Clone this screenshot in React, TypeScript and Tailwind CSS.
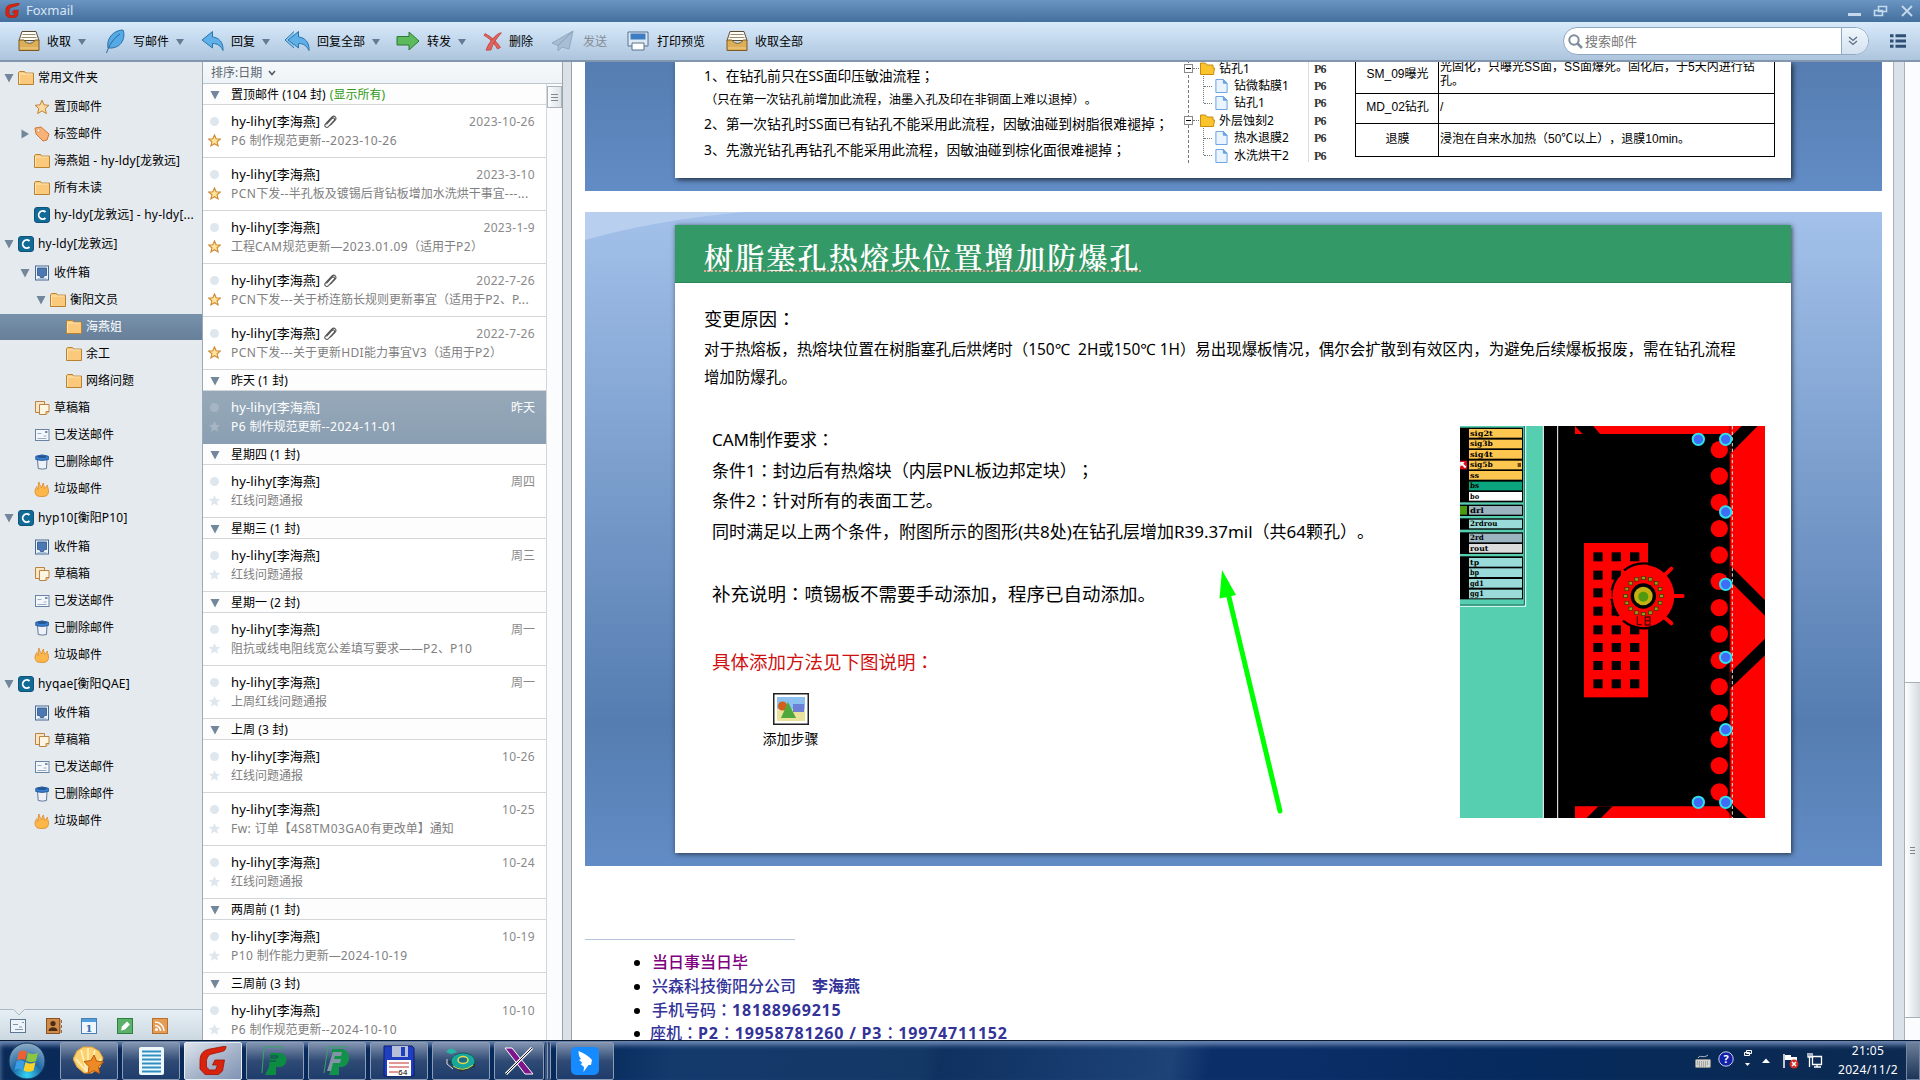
import type { ReactNode } from "react";
import clsx from "clsx";

type IconName = "folder" | "star" | "tag" | "account" | "inbox" | "draft" | "sent" | "trash" | "junk";

interface TreeItem {
  label: string;
  icon: IconName;
  level: number;
  arrow?: "open" | "closed";
  selected?: boolean;
  head?: boolean;
}

interface Mail {
  subject: string;
  date: string;
  clip?: boolean;
  starred?: boolean;
  selected?: boolean;
}

const boxes: TreeItem[] = [
  { label: "草稿箱", icon: "draft", level: 1 },
  { label: "已发送邮件", icon: "sent", level: 1 },
  { label: "已删除邮件", icon: "trash", level: 1 },
  { label: "垃圾邮件", icon: "junk", level: 1 },
];

const tree: TreeItem[] = [
  { label: "常用文件夹", icon: "folder", level: 0, arrow: "open", head: true },
  { label: "置顶邮件", icon: "star", level: 1 },
  { label: "标签邮件", icon: "tag", level: 1, arrow: "closed" },
  { label: "海燕姐 - hy-ldy[龙敦远]", icon: "folder", level: 1 },
  { label: "所有未读", icon: "folder", level: 1 },
  { label: "hy-ldy[龙敦远] - hy-ldy[...", icon: "account", level: 1 },
  { label: "hy-ldy[龙敦远]", icon: "account", level: 0, arrow: "open", head: true },
  { label: "收件箱", icon: "inbox", level: 1, arrow: "open" },
  { label: "衡阳文员", icon: "folder", level: 2, arrow: "open" },
  { label: "海燕姐", icon: "folder", level: 3, selected: true },
  { label: "余工", icon: "folder", level: 3 },
  { label: "网络问题", icon: "folder", level: 3 },
  ...boxes,
  { label: "hyp10[衡阳P10]", icon: "account", level: 0, arrow: "open", head: true },
  { label: "收件箱", icon: "inbox", level: 1 },
  ...boxes,
  { label: "hyqae[衡阳QAE]", icon: "account", level: 0, arrow: "open", head: true },
  { label: "收件箱", icon: "inbox", level: 1 },
  ...boxes,
];

const groups: { title: string; extra?: string; mails: Mail[] }[] = [
  {
    title: "置顶邮件 (104 封)",
    extra: "(显示所有)",
    mails: [
      { subject: "P6 制作规范更新--2023-10-26", date: "2023-10-26", clip: true, starred: true },
      { subject: "PCN下发--半孔板及镀锡后背钻板增加水洗烘干事宜---...", date: "2023-3-10", starred: true },
      { subject: "工程CAM规范更新—2023.01.09（适用于P2）", date: "2023-1-9", starred: true },
      { subject: "PCN下发---关于桥连筋长规则更新事宜（适用于P2、P...", date: "2022-7-26", clip: true, starred: true },
      { subject: "PCN下发---关于更新HDI能力事宜V3（适用于P2）", date: "2022-7-26", clip: true, starred: true },
    ],
  },
  { title: "昨天 (1 封)", mails: [{ subject: "P6 制作规范更新--2024-11-01", date: "昨天", selected: true }] },
  { title: "星期四 (1 封)", mails: [{ subject: "红线问题通报", date: "周四" }] },
  { title: "星期三 (1 封)", mails: [{ subject: "红线问题通报", date: "周三" }] },
  {
    title: "星期一 (2 封)",
    mails: [
      { subject: "阻抗或线电阻线宽公差填写要求——P2、P10", date: "周一" },
      { subject: "上周红线问题通报", date: "周一" },
    ],
  },
  {
    title: "上周 (3 封)",
    mails: [
      { subject: "红线问题通报", date: "10-26" },
      { subject: "Fw: 订单【4S8TM03GA0有更改单】通知", date: "10-25" },
      { subject: "红线问题通报", date: "10-24" },
    ],
  },
  { title: "两周前 (1 封)", mails: [{ subject: "P10 制作能力更新—2024-10-19", date: "10-19" }] },
  { title: "三周前 (3 封)", mails: [{ subject: "P6 制作规范更新--2024-10-10", date: "10-10" }] },
];

const STAR = "M8 1.2l2 4.7 5 .4-3.8 3.3 1.2 5L8 11.9l-4.4 2.7 1.2-5L1 6.3l5-.4z";

// Mixed text: tracks the latin runs and centres full-width colons and semicolons.
function Mix({ text, latin }: { text: string; latin?: string }) {
  return (
    <>
      {text.split(/([\x20-\x7e]+|[：；])/).map((part, i) => {
        if (part === "：" || part === "；") {
          return (
            <span key={i} lang="zh-TW" className="font-['Noto_Sans_CJK_TC',sans-serif] leading-none">
              {part}
            </span>
          );
        }
        return i % 2 ? (
          <span key={i} className={latin}>
            {part}
          </span>
        ) : (
          part
        );
      })}
    </>
  );
}

function TreeIcon({ name }: { name: IconName }) {
  return (
    <svg viewBox="0 0 16 16" className="h-4 w-4 shrink-0">
      {name === "folder" && (
        <>
          <path d="M.5 14.5v-12l1-1h5l1.2 1.6h7.8v11.4z" fill="#fbc97c" stroke="#b9822f" />
          <path d="M1.5 4h13M1.5 4v9.5" stroke="#ffe6b8" fill="none" />
        </>
      )}
      {name === "star" && <path d={STAR} fill="#fcd9a0" stroke="#c08436" />}
      {name === "tag" && (
        <>
          <path d="M1 2l6-1 8 7-2 6-4 1-7-7z" fill="#f8b277" stroke="#c97a3c" />
          <circle cx="4.5" cy="4.5" r="1.4" fill="#fff" stroke="#c97a3c" strokeWidth=".6" />
        </>
      )}
      {name === "account" && (
        <>
          <rect x=".5" y=".5" width="15" height="15" rx="2.5" fill="#126a97" stroke="#0e5478" />
          <path d="M11.5 5A4 4.200 0 1 0 11.5 11" fill="none" stroke="#fff" strokeWidth="1.8" />
        </>
      )}
      {name === "inbox" && (
        <>
          <rect x="1.5" y="1" width="13" height="14" fill="#eef3f9" stroke="#476a94" />
          <path d="M3.5 3h9v7.5h-2l-1 2h-3l-1-2h-2z" fill="#4a78b5" stroke="#2c5488" strokeWidth=".8" />
          <path d="M3.5 13.8h9" stroke="#7e9cc0" strokeWidth=".8" />
        </>
      )}
      {name === "draft" && (
        <>
          <path d="M1.5 1.5h9v11h-9z" fill="#fbe6c4" stroke="#b98443" />
          <path d="M5.5 4.5h9.500v7l-3 3h-6.500z" fill="#fff6e2" stroke="#b98443" />
          <path d="M12 14.5v-3h3" fill="#f4c98c" stroke="#b98443" />
        </>
      )}
      {name === "sent" && (
        <>
          <rect x="1.5" y="2.5" width="13.500" height="11" fill="#f3f7fb" stroke="#6b83a3" />
          <path d="M3.5 6.5h4M3.5 11.5h9M9.5 9h3" stroke="#9aaec6" />
          <path d="M11 5h2.500" stroke="#5a7394" strokeWidth="1.6" />
        </>
      )}
      {name === "trash" && (
        <>
          <path d="M3.5 5h9.5l-.5 9.5q-4 1.300-8.300 0z" fill="#eef2f7" stroke="#60789a" />
          <path d="M1.800 2.300q6.300-2.800 12.600 0v3.200q-6.300 1.800-12.600 0z" fill="#3b7fd0" stroke="#275d9f" />
          <ellipse cx="8" cy="2.7" rx="4.5" ry="1.2" fill="#235591" />
        </>
      )}
      {name === "junk" && (
        <path
          d="M3 14.800C0 12 .8 8 3 5.500c0 2 .8 2 1.200 3C5 6 3.500 4 5 1c.2 3 2 4 2.500 6C8.500 5 8 3 9.500 2c0 2.500 1 3.500 1 5.500C12 7 12 5.500 13.500 4c-.5 2 1 3 1 6 0 2-.5 3.500-2 4.800-2.500 1-7 1-9.500 0z"
          fill="#fdb648"
          stroke="#d9862b"
          strokeWidth=".8"
        />
      )}
    </svg>
  );
}

const indents = ["pl-0.5", "pl-[18px]", "pl-[34px]", "pl-[50px]"];

function Triangle({ dir = "down" }: { dir?: "down" | "right" }) {
  return (
    <svg viewBox="0 0 10 10" className="h-2.5 w-2.5 shrink-0">
      <path d={dir === "down" ? "M.5 1h9L5 9.5z" : "M1.5.5v9L9 5z"} fill="#72879b" />
    </svg>
  );
}

function Sidebar() {
  return (
    <aside className="flex w-[203px] shrink-0 flex-col border-r border-[#9aa9b6] bg-[#e5eaef]">
      <div className="flex-1">
        {tree.map((item, i) => (
          <div key={i} className={clsx("flex items-center", item.head ? "h-[31px]" : "h-[27px]")}>
            <div
              className={clsx(
                "flex h-[26px] w-full items-center whitespace-nowrap text-xs",
                indents[item.level],
                item.selected ? "bg-linear-to-b from-[#7892ab] to-[#677f99] text-white" : "text-black"
              )}
            >
              <span className="flex w-4 items-center pl-0.5">
                {item.arrow ? <Triangle dir={item.arrow === "open" ? "down" : "right"} /> : null}
              </span>
              <TreeIcon name={item.icon} />
              <span className="ml-1">
                <Mix text={item.label} latin="tracking-[0.2px]" />
              </span>
            </div>
          </div>
        ))}
      </div>
      <div className="relative flex h-[31px] items-center gap-[19.5px] border-t border-[#a9b8c4] bg-linear-to-b from-[#e6eff5] to-[#ccd8e1] pl-[10px] pt-px">
        <svg viewBox="0 0 12 7" className="absolute -top-px left-[13px] h-[7px] w-3">
          <path d="M0 0h12L6 6z" fill="#e5eaef" />
          <path d="M.5.5L6 6 11.5.5" fill="none" stroke="#a9b8c4" />
        </svg>
        <svg viewBox="0 0 16 16" className="h-4 w-4">
          <rect x=".5" y="1.5" width="15" height="13" fill="#edf3f8" stroke="#5f7690" />
          <path d="M3 6.5h5M5 11.5h8M9 9h3M12 4.5h2" stroke="#7d94ad" />
        </svg>
        <svg viewBox="0 0 16 16" className="h-4 w-4">
          <rect x=".5" y=".5" width="13" height="15" fill="#d08a4a" stroke="#8a5325" />
          <path d="M14 1v14M15.5 2v3m0 2v3m0 2v3" stroke="#a4652f" />
          <circle cx="7" cy="5.5" r="2.6" fill="#4b2d14" />
          <path d="M2.5 13c0-5 9-5 9 0z" fill="#4b2d14" />
        </svg>
        <svg viewBox="0 0 16 16" className="h-4 w-4">
          <rect x=".5" y=".5" width="15" height="15" fill="#eef6fc" stroke="#4a7fb0" />
          <path d="M1 1h14v3H1z" fill="#4f9fdf" />
          <text x="8" y="13.5" fontSize="10" fontWeight="bold" fontFamily="DejaVu Serif" textAnchor="middle" fill="#2f6fa8">
            1
          </text>
        </svg>
        <svg viewBox="0 0 16 16" className="h-4 w-4">
          <rect x=".5" y=".5" width="15" height="15" fill="#5bb06a" stroke="#2f7f41" />
          <path d="M4 12.5l1-4 5-5 3 3-5 5z" fill="#fff" />
        </svg>
        <svg viewBox="0 0 16 16" className="h-4 w-4">
          <rect x=".5" y=".5" width="15" height="15" fill="#e59a55" stroke="#b86f2c" />
          <circle cx="4.5" cy="11.5" r="1.5" fill="#fff" />
          <path d="M3 7.5a5.500 5.500 0 0 1 5.500 5.500M3 4a9 9 0 0 1 9 9" fill="none" stroke="#fff" strokeWidth="1.5" />
        </svg>
      </div>
    </aside>
  );
}

function MailRow({ mail }: { mail: Mail }) {
  const { selected } = mail;
  return (
    <div
      className={clsx(
        "flex h-[53px] border-b",
        selected ? "border-[#8a9fb2] bg-linear-to-b from-[#97a9b9] to-[#8a9fb2]" : "border-[#d3d7da] bg-white"
      )}
    >
      <div className="flex w-7 shrink-0 flex-col items-center pr-[5px] pt-3">
        <span className={clsx("h-[9px] w-[9px] rounded-full", selected ? "bg-[#a5b5c4]" : "bg-[#dfe7ee]")} />
        <svg viewBox="0 0 16 16" className="mt-2 h-[13px] w-[13px]">
          <path
            d={STAR}
            fill={selected ? "#a5b5c4" : mail.starred ? "#ffe49a" : "#dfe7ee"}
            stroke={mail.starred ? "#cf8a35" : "none"}
            strokeWidth="1.4"
          />
        </svg>
      </div>
      <div className="min-w-0 flex-1 whitespace-nowrap pr-[11px] pt-[7px]">
        <div className="flex h-5 items-center">
          <span className={clsx("text-[13px]", selected ? "text-white" : "text-black")}>
            <Mix text="hy-lihy[李海燕]" latin="tracking-[0.15px]" />
          </span>
          {mail.clip ? (
            <svg viewBox="0 0 14 14" className="ml-[3px] h-[14px] w-[14px]">
              <path
                d="M3.5 9.5l5.500-6c1.500-1.500 3.500.3 2 2L5.500 11.700c-2 2-5-.5-3-2.900L9 2c2.300-2.200 5.300.7 3.200 3.200L7.500 10"
                fill="none"
                stroke="#555"
                strokeWidth="1.1"
              />
            </svg>
          ) : null}
          <span className={clsx("ml-auto text-xs", selected ? "text-white" : "text-[#8a8a8a]")}>
            <Mix text={mail.date} latin="tracking-[0.33px]" />
          </span>
        </div>
        <div className={clsx("h-[18px] text-xs leading-[18px]", selected ? "text-white" : "text-[#808080]")}>
          <Mix text={mail.subject} latin="tracking-[0.42px]" />
        </div>
      </div>
    </div>
  );
}

function MailList() {
  return (
    <section className="flex w-[359px] shrink-0 flex-col overflow-hidden">
      <div className="flex h-[22px] shrink-0 items-center border-b border-[#bcc6cd] bg-linear-to-b from-[#f6f9fb] to-[#eef3f7] pl-2 text-xs text-[#5c6670]">
        排序:日期
        <svg viewBox="0 0 8 6" className="ml-1.5 h-1.5 w-2">
          <path d="M1 1l3 3.5L7 1" fill="none" stroke="#4b5763" strokeWidth="1.5" />
        </svg>
      </div>
      <div className="flex min-h-0 flex-1">
        <div className="w-[344px] shrink-0 overflow-hidden border-r border-[#d3d7da]">
          {groups.map((g) => (
            <div key={g.title}>
              <div className="flex h-[21px] items-center border-b border-[#d3d7da] bg-[#fdfdfd] pl-[7px] pt-0.5 text-xs text-black">
                <Triangle />
                <span className="ml-[11px]">
                  <Mix text={g.title} latin="tracking-[0.1px]" />
                </span>
                {g.extra ? <span className="ml-1 text-[#2f9a10]">{g.extra}</span> : null}
              </div>
              {g.mails.map((m, i) => (
                <MailRow key={i} mail={m} />
              ))}
            </div>
          ))}
        </div>
        <div className="flex-1 bg-[#fbfcfd] pt-0.5">
          <div className="flex h-[22px] flex-col items-center justify-center gap-0.5 border border-[#aab4bc] bg-linear-to-r from-[#fbfcfd] to-[#dde3e8]">
            <i className="h-px w-[7px] bg-[#7d8790]" />
            <i className="h-px w-[7px] bg-[#7d8790]" />
            <i className="h-px w-[7px] bg-[#7d8790]" />
          </div>
        </div>
      </div>
    </section>
  );
}

function TrayBox() {
  return (
    <svg viewBox="0 0 22 22" className="h-[22px] w-[22px]">
      <path d="M4 1.5h14l3 9H1z" fill="#fffdf6" stroke="#5b4a33" />
      <path d="M4.5 4.5h13M3.5 7.5h15" stroke="#9c8a6e" />
      <path d="M1 10h4.500q6 7 12 0H21v10.500H1z" fill="#dcae58" stroke="#7f5a20" />
      <path d="M2 18h18" stroke="#f0d08c" />
    </svg>
  );
}

function ReplyArrow({ all }: { all?: boolean }) {
  return (
    <svg viewBox={all ? "0 0 27 22" : "0 0 24 22"} className={all ? "h-[22px] w-[27px]" : "h-[22px] w-6"}>
      {all ? <path d="M10 1.5L1 10l9 8" fill="#8cc6ee" stroke="#2f78ad" /> : null}
      <path
        transform={all ? "translate(3 0)" : undefined}
        d="M11.5 1.5L1 10l10.500 8v-4.500c5 0 8 2 10.500 7 .5-8-4-13-10.500-13.500z"
        fill="#5fb0e8"
        stroke="#2b74ac"
      />
    </svg>
  );
}

function Tool({ icon, label, className, iconClass, arrow, muted }: {
  icon: ReactNode;
  label: string;
  className: string;
  iconClass: string;
  arrow?: boolean;
  muted?: boolean;
}) {
  return (
    <div className={clsx("flex shrink-0 items-center text-xs", className, muted ? "text-[#848d96]" : "text-black")}>
      <span className={clsx("shrink-0", iconClass)}>{icon}</span>
      <span className="pt-0.5">{label}</span>
      {arrow ? (
        <svg viewBox="0 0 8 6" className="ml-[7px] mt-0.5 h-1.5 w-2">
          <path d="M0 0h8L4 6z" fill="#647b93" />
        </svg>
      ) : null}
    </div>
  );
}

function Toolbar() {
  return (
    <div className="flex h-10 shrink-0 items-center border-b-2 border-[#8297ad] bg-linear-to-b from-[#d8eafb] to-[#adc5dd] pl-[18px]">
      <Tool className="w-[87px]" iconClass="w-[29px]" icon={<TrayBox />} label="收取" arrow />
      <Tool
        className="w-[96px]"
        iconClass="w-[28px]"
        icon={
          <svg viewBox="0 0 22 25" className="h-[25px] w-[22px]">
            <path d="M3 19C1 8 10 1 18 1c3 7-1 17-11 18z" fill="#55a9e4" stroke="#2c74a9" />
            <path d="M1.5 24C4 16 9 9 15 5" fill="none" stroke="#2a6a9e" />
          </svg>
        }
        label="写邮件"
        arrow
      />
      <Tool className="w-[83px]" iconClass="w-[30px]" icon={<ReplyArrow />} label="回复" arrow />
      <Tool className="w-[112px]" iconClass="w-[33px]" icon={<ReplyArrow all />} label="回复全部" arrow />
      <Tool
        className="w-[87px]"
        iconClass="w-[31px]"
        icon={
          <svg viewBox="0 0 24 20" className="h-5 w-6">
            <path d="M1 5.5h12V1l10 9-10 9v-5H1z" fill="#5cb95c" stroke="#2c7a34" />
          </svg>
        }
        label="转发"
        arrow
      />
      <Tool
        className="w-[68px]"
        iconClass="w-[26px]"
        icon={
          <svg viewBox="0 0 20 19" className="h-[19px] w-5">
            <path d="M2 1.500c6 3 12 8 15.500 14l-3 1.500C11 11 6 6 1 3.500z" fill="#e0625a" stroke="#b5332e" strokeWidth=".6" />
            <path d="M18.500.8C14 6 10 11 8 18l-5 .2C5.500 11 10 5 16 1.200z" fill="#e0625a" stroke="#b5332e" strokeWidth=".6" />
          </svg>
        }
        label="删除"
      />
      <Tool
        className="w-[76px]"
        iconClass="w-8"
        muted
        icon={
          <svg viewBox="0 0 23 22" className="h-[22px] w-[23px]">
            <path d="M22 1L1 13l6 2.500zM22 1L7 15.500V21l4-4 7 2z" fill="#a8bed4" stroke="#90a8c0" />
          </svg>
        }
        label="发送"
      />
      <Tool
        className="w-[99px]"
        iconClass="w-[30px]"
        icon={
          <svg viewBox="0 0 22 20" className="h-5 w-[22px]">
            <path d="M1 1h20v14H1z" fill="#dfe9f3" stroke="#55708f" />
            <path d="M3.5 2.5h15v6h-15z" fill="#3e7cc4" />
            <path d="M5 12h12v7H5z" fill="#fff" stroke="#55708f" />
          </svg>
        }
        label="打印预览"
      />
      <Tool className="w-[90px]" iconClass="w-[29px]" icon={<TrayBox />} label="收取全部" />
      <div className="ml-auto flex h-7 w-[306px] shrink-0 overflow-hidden rounded-full border border-[#8fa9c4] bg-white">
        <div className="flex flex-1 items-center pl-1">
          <svg viewBox="0 0 15 15" className="h-[15px] w-[15px]">
            <circle cx="6" cy="6" r="4.7" fill="none" stroke="#7e8c9c" strokeWidth="2" />
            <path d="M9.5 9.5L14 14" stroke="#7e8c9c" strokeWidth="2.5" />
          </svg>
          <span className="ml-0.5 pt-0.5 text-[13px] text-[#777]">搜索邮件</span>
        </div>
        <div className="flex w-[27px] items-center justify-center border-l border-[#8fa9c4] bg-linear-to-b from-[#f0f6fc] to-[#d4e2f0] pr-1">
          <svg viewBox="0 0 10 10" className="h-2.5 w-2.5">
            <path d="M1 1l4 3.5L9 1M1 5l4 3.5L9 5" fill="none" stroke="#5b6f84" strokeWidth="1.3" />
          </svg>
        </div>
      </div>
      <svg viewBox="0 0 16 14" className="ml-[21px] mr-[14px] h-[14px] w-4 shrink-0">
        <path d="M0 1.7h3.500M0 7h3.500M0 12.300h3.500M5.500 1.700H16M5.500 7H16M5.500 12.300H16" stroke="#2f4f75" strokeWidth="3" />
      </svg>
    </div>
  );
}

function FoxLogo({ className }: { className: string }) {
  return (
    <svg viewBox="0 0 28 29" className={className}>
      <path
        d="M27 0c0 3-1 5-4 5.500L13 8c-4 1-5.500 4-5.500 8v5l3 3h6l2-5h-5L16 14h9.500l-2 11-4 3.500H6L1 23v-8C1 7 5 4 11 3z"
        fill="#d9230f"
        stroke="#9c1406"
        strokeWidth=".8"
      />
    </svg>
  );
}

const flow = [
  { name: "钻孔1", parent: true },
  { name: "钻微黏膜1" },
  { name: "钻孔1" },
  { name: "外层蚀刻2", parent: true },
  { name: "热水退膜2" },
  { name: "水洗烘干2" },
];

function FlowTree() {
  return (
    <div className="relative mt-[-2px] h-[104px] w-[150px]">
      <i className="absolute left-[4px] top-0 h-[103px] border-l border-dashed border-[#777]" />
      <i className="absolute left-[19px] top-4 h-[27px] border-l border-dotted border-[#777]" />
      <i className="absolute left-[19px] top-[68px] h-[27px] border-l border-dotted border-[#777]" />
      <i className="absolute left-[124px] top-0 h-[102px] border-l border-[#ddd]" />
      {flow.map((f, i) => (
        <div key={i} className="relative flex h-[17.4px] items-center text-xs leading-none text-black">
          {f.parent ? (
            <>
              <span className="flex h-[9px] w-[9px] items-center justify-center border border-[#888] bg-white">
                <i className="h-px w-[5px] bg-black" />
              </span>
              <i className="w-1.5 border-t border-dotted border-[#777]" />
              <svg viewBox="0 0 15 13" className="ml-px h-[13px] w-[15px]">
                <path d="M.5 12.5V1h5l1.500 2h6v3h1.500l-1 6.500z" fill="#fcc42c" stroke="#c98a10" />
              </svg>
              <span className="ml-1">{f.name}</span>
            </>
          ) : (
            <>
              <i className="ml-[20px] w-2 border-t border-dotted border-[#777]" />
              <svg viewBox="0 0 13 15" className="ml-[3px] h-[14px] w-[13px]">
                <path d="M.5.5h8l4 4v10H.5z" fill="#eaf4ff" stroke="#5f9be0" />
                <path d="M8.5.5v4h4" fill="#6ba6e8" stroke="#5f9be0" />
              </svg>
              <span className="ml-[6px]">{f.name}</span>
            </>
          )}
          <span className="absolute left-[130px] font-['Liberation_Serif'] text-[12px] font-bold tracking-[-0.8px] text-[#333]">
            P6
          </span>
        </div>
      ))}
    </div>
  );
}

const specs = [
  {
    step: "SM_09曝光",
    note: "光固化，只曝光SS面，SS面爆死。固化后，于5天内进行钻孔。",
    h: "h-[43px] pt-[3px]",
  },
  { step: "MD_02钻孔", note: "/", h: "h-[30px] pb-[3px]" },
  { step: "退膜", note: "浸泡在自来水加热（50℃以上），退膜10min。", h: "h-[33px] pb-[3px]" },
];

function SpecTable() {
  return (
    <div className="relative -mt-[11px] h-[106px] w-[420px] border-x border-black font-['Liberation_Sans','Noto_Sans_CJK_SC',sans-serif] text-xs leading-[14px] text-black">
      <i className="absolute inset-y-0 left-[82px] border-l border-black" />
      {specs.map((s) => (
        <div key={s.step} className={clsx("flex border-b border-black", s.h)}>
          <div className="flex w-[83px] shrink-0 items-center justify-center">{s.step}</div>
          <div className="flex flex-1 items-center pl-px pr-3">
            <span>{s.note}</span>
          </div>
        </div>
      ))}
    </div>
  );
}

function UpperSlide() {
  return (
    <div className="h-[129px] w-[1297px] bg-linear-to-b from-[#557db1] to-[#628cc5] pl-[90px]">
      <div className="flex h-[116px] w-[1116px] bg-white shadow-[2px_2px_5px_rgba(0,0,0,0.65)]">
        <div className="w-[480px] shrink-0 whitespace-nowrap pl-[29px] pt-[2px] text-[13.8px] text-black">
          <div className="h-6 leading-6">
            <Mix text="1、在钻孔前只在SS面印压敏油流程；" />
          </div>
          <div className="h-6 pl-px text-[12.25px] leading-6">（只在第一次钻孔前增加此流程，油墨入孔及印在非铜面上难以退掉）。</div>
          <div className="h-[25px] leading-6">
            <Mix text="2、第一次钻孔时SS面已有钻孔不能采用此流程，因敏油碰到树脂很难褪掉；" />
          </div>
          <div className="h-[25px] leading-[25px]">
            <Mix text="3、先激光钻孔再钻孔不能采用此流程，因敏油碰到棕化面很难褪掉；" />
          </div>
        </div>
        <div className="ml-[29px] w-[171px] shrink-0">
          <FlowTree />
        </div>
        <SpecTable />
      </div>
    </div>
  );
}

const layers = [
  { n: "sig2t", y: 56, c: "#fdc64f" },
  { n: "sig3b", y: 88, c: "#fdc64f" },
  { n: "sig4t", y: 119, c: "#fdc64f" },
  { n: "sig5b", y: 151, c: "#fdc64f" },
  { n: "ss", y: 182, c: "#fdc64f" },
  { n: "bs", y: 214, c: "#0aa57f" },
  { n: "bo", y: 245, c: "#ffffff" },
  { n: "drl", y: 287, c: "#9cb3c0" },
  { n: "2rdrou", y: 328, c: "#9adad9" },
  { n: "2rd", y: 370, c: "#9cb3c0" },
  { n: "rout", y: 401, c: "#dcdcdc" },
  { n: "tp", y: 443, c: "#9adad9" },
  { n: "bp", y: 474, c: "#9adad9" },
  { n: "gd1", y: 506, c: "#9adad9" },
  { n: "gg1", y: 538, c: "#9adad9" },
];

const viaMarks = [
  [775, 87], [857, 87], [857, 305], [857, 522], [857, 741], [857, 958], [775, 1176], [857, 1176],
];

function BoardView() {
  return (
    <svg viewBox="60 47 915 1176" preserveAspectRatio="none" className="h-[392px] w-[305px] shrink-0">
      <rect x="60" y="47" width="250" height="1176" fill="#56cfb0" />
      <path d="M60 588h197V47" fill="none" stroke="#e8fff8" strokeWidth="3" />
      <path d="M60 584h193V47" fill="none" stroke="#1a6a58" strokeWidth="3" />
      {[[52, 224], [283, 34], [324, 34], [366, 65], [438, 129]].map(([y, h]) => (
        <rect key={y} x="60" y={y} width="189" height={h} fill="#000" />
      ))}
      {layers.map((l) => (
        <g key={l.n}>
          <rect x="87" y={l.y} width="159" height="26" fill={l.c} />
          <text
            x="90"
            y={l.y + 20}
            fontFamily="DejaVu Serif"
            fontWeight="bold"
            fontSize="22"
            textLength={l.n.length * 13.7}
            lengthAdjust="spacingAndGlyphs"
            fill="#000"
          >
            {l.n}
          </text>
        </g>
      ))}
      <rect x="60" y="287" width="21" height="26" fill="#4a9a10" />
      <rect x="60" y="151" width="21" height="26" fill="#d8101c" />
      <path d="M60 155h14l-4 5 9 9-4 5-9-9-5 4z" fill="#fff" />
      <rect x="233" y="158" width="10" height="12" fill="#6b4a10" />
      <rect x="310" y="47" width="560" height="1176" fill="#000" />
      <path d="M310 47v1176M353 47v1176" stroke="#fff" strokeWidth="3" />
      <path d="M405 47h470v24H405zM405 1188h470v35H405z" fill="#f00" />
      <rect x="870" y="47" width="105" height="1176" fill="#f00" />
      <g fill="#000">
        <path d="M405 47h55l20 24h-52zM440 1223l35-35h43l-35 35z" />
        <path d="M905 47h48l-83 84V82zM870 465l105 105v46L870 512zM975 685v50l-105 100v-48zM870 1175l52 48h-42l-30-35z" />
      </g>
      <path d="M405 51l22 20h-22z" fill="#f00" />
      <path d="M870 47v1176" stroke="#700" strokeWidth="3" />
      <path d="M877 47v1176" stroke="#e8e8e8" strokeWidth="3" strokeDasharray="10 7" />
      <rect x="432" y="398" width="192" height="463" fill="#f00" />
      {[426, 481, 534, 589, 645, 698, 752, 807].map((y) =>
        [460, 515, 570].map((x) => <rect key={`${x}-${y}`} x={x} y={y} width="28" height="27" fill="#000" />)
      )}
      <circle cx="610" cy="557" r="93" fill="#f00" />
      <path d="M515 540a97 97 0 0 1 25-48m12-12a97 97 0 0 1 72-20M515 565a97 97 0 0 0 20 52m14 14a97 97 0 0 0 75 22" fill="none" stroke="#000" strokeWidth="7" />
      <path d="M700 557h28M676 492l18-17M676 623l18 16" stroke="#f00" strokeWidth="12" strokeLinecap="round" />
      {Array.from({ length: 16 }, (_, i) => {
        const a = (i * Math.PI) / 8;
        return (
          <rect
            key={i}
            x={605 + 54 * Math.cos(a)}
            y={552 + 54 * Math.sin(a)}
            width="11"
            height="10"
            fill="#8fa010"
            stroke="#3a2a00"
            strokeWidth="2"
          />
        );
      })}
      <circle cx="610" cy="557" r="38" fill="#000" />
      <circle cx="610" cy="557" r="28" fill="#c4b010" />
      <circle cx="610" cy="559" r="15" fill="#4f9a10" />
      <path d="M592 618v25h14M616 620h14v24h-14zM616 631h14" fill="none" stroke="#500" strokeWidth="4" />
      {Array.from({ length: 14 }, (_, i) => (
        <circle key={i} cx="838" cy={118 + i * 79} r="26" fill="#f00" />
      ))}
      {viaMarks.map(([x, y]) => (
        <circle key={`${x}-${y}`} cx={x} cy={y} r="17" fill="#3f6cf5" stroke="#2fe0ee" strokeWidth="6" />
      ))}
    </svg>
  );
}

function LowerSlide() {
  return (
    <div className="relative mt-[21px] h-[654px] w-[1297px] bg-linear-to-b from-[#a3c1ea] via-[#557db1] via-78% to-[#628cc5] pl-[90px] pt-[13px]">
      <svg viewBox="0 0 160 30" className="absolute left-0 top-0 h-[30px] w-40">
        <path d="M0 0h160Q70 8 0 28z" fill="#b9cff0" />
      </svg>
      <div className="relative h-[628px] w-[1116px] bg-white text-black shadow-[1px_1px_5px_rgba(0,0,0,0.65)]">
        <div className="h-[58px] border-b border-[#2b8558] bg-[#339966] pl-[29px] pt-4">
          <div className="h-[31px] w-[437px] whitespace-nowrap border-b-2 border-dotted border-[#e0a890] font-['AR_PL_UKai_CN','KaiTi','Noto_Serif_CJK_SC','Noto_Sans_CJK_SC',serif] text-[29px] font-semibold leading-[31px] tracking-[2.2px] text-white">
            树脂塞孔热熔块位置增加防爆孔
          </div>
        </div>
        <div className="whitespace-nowrap pl-[29px]">
          <div className="mt-[24px] h-6 text-[18.3px] leading-6">
            <Mix text="变更原因：" />
          </div>
          <div className="mt-1 text-[15.44px] leading-7">
            对于热熔板，热熔块位置在树脂塞孔后烘烤时（150℃&nbsp; 2H或150℃ 1H）易出现爆板情况，偶尔会扩散到有效区内，为避免后续爆板报废，需在钻孔流程
            <br />
            增加防爆孔。
          </div>
        </div>
        <div className="mt-[34px] flex whitespace-nowrap pl-[37px]">
          <div className="w-[748px] shrink-0">
            <div className="text-[17px] leading-[30.7px]">
              <div className="h-[30.7px]">
                <Mix text="CAM制作要求：" />
              </div>
              <div className="h-[30.7px]">
                <Mix text="条件1：封边后有热熔块（内层PNL板边邦定块）；" />
              </div>
              <div className="h-[30.7px]">
                <Mix text="条件2：针对所有的表面工艺。" />
              </div>
              <div className="h-[30.7px]">
                同时满足以上两个条件，附图所示的图形(共8处)在钻孔层增加R39.37mil（共64颗孔）。
              </div>
            </div>
            <div className="mt-[34px] h-6 text-[18.5px] leading-6">
              <Mix text="补充说明：喷锡板不需要手动添加，程序已自动添加。" />
            </div>
            <div className="mt-[44px] h-6 text-[18.5px] leading-6 text-[#d01010]">
              <Mix text="具体添加方法见下图说明：" />
            </div>
            <div className="mt-[19px] flex w-[157px] flex-col items-center text-sm leading-[28px]">
              <svg viewBox="0 0 36 32" className="h-8 w-9">
                <rect x=".75" y=".75" width="34.5" height="30.5" fill="#fff" stroke="#222" strokeWidth="1.5" />
                <rect x="4" y="4" width="28" height="12" fill="#8cc0f0" />
                <rect x="4" y="16" width="28" height="12" fill="#e8e29a" />
                <rect x="20" y="11" width="11" height="8" fill="#6c80d8" />
                <circle cx="9.5" cy="13" r="4.5" fill="#d2601c" />
                <path d="M15 9l8 16H8z" fill="#4fa83c" />
              </svg>
              添加步骤
            </div>
          </div>
          <div className="pt-px">
            <BoardView />
          </div>
        </div>
        <svg viewBox="0 0 70 250" className="absolute left-[540px] top-[343px] h-[250px] w-[70px]">
          <path d="M13 25l52 218" stroke="#0f0" strokeWidth="5" strokeLinecap="round" />
          <path d="M7 2l14 25-16.500 3.500z" fill="#0f0" />
        </svg>
      </div>
    </div>
  );
}

function MailBody() {
  return (
    <main className="flex min-w-0 flex-1 bg-white [text-spacing-trim:space-all]">
      <div className="w-2.5 shrink-0 border-x border-[#9ba4ab] bg-[#dbe1e6]" />
      <div className="min-w-0 flex-1 overflow-hidden pl-[13px]">
        <UpperSlide />
        <LowerSlide />
        <div className="mt-[73px] w-[210px] border-t border-[#b5c4df]" />
        <ul className="mt-[10px] list-disc whitespace-nowrap pl-[67px] text-base font-medium leading-6 text-[#333399] marker:text-black">
          <li className="h-6 text-[#800080]">当日事当日毕</li>
          <li className="h-6">
            兴森科技衡阳分公司<span className="ml-4 font-bold">李海燕</span>
          </li>
          <li className="h-6">
            <Mix text="手机号码：18188969215" latin="font-bold tracking-[0.8px]" />
          </li>
          <li className="h-[23px] -indent-0.5 leading-[23px]">
            <Mix text="座机：P2：19958781260 / P3：19974711152" latin="font-bold tracking-[0.8px]" />
          </li>
        </ul>
      </div>
      <div className="w-3 shrink-0 border-x border-[#a9b0b8] bg-[#dbe1e8]" />
      <div className="flex w-[15px] shrink-0 flex-col bg-[#fbfcfd] pt-[620px]">
        <div className="flex h-[336px] flex-col items-center justify-center gap-0.5 border-y border-[#a9b0b8] bg-linear-to-r from-white to-[#d5dbe1]">
          <i className="h-px w-[5px] bg-[#7d8790]" />
          <i className="h-px w-[5px] bg-[#7d8790]" />
          <i className="h-px w-[5px] bg-[#7d8790]" />
        </div>
      </div>
    </main>
  );
}

function TaskButton({ children, active, className }: { children: ReactNode; active?: boolean; className?: string }) {
  return (
    <div
      className={clsx(
        "flex h-[38px] w-[58px] shrink-0 items-center justify-center rounded-xs border",
        active
          ? "border-[#e6edf5] bg-linear-to-br from-[#dfe5ee] via-[#aab7cc] to-[#7f93b3]"
          : "border-[#8c9cb5] bg-linear-to-b from-[#8394b0] via-[#2f4a74] to-[#1e3c6c]",
        className
      )}
    >
      {children}
    </div>
  );
}

function Taskbar() {
  return (
    <footer className="flex h-10 shrink-0 items-center border-t border-[#0a1a30] bg-[linear-gradient(100deg,#0a2a58_0%,#062a5c_31%,#143a6c_35%,#143866_48%,#0f3161_49%,#1d4377_61%,#0b2e68_63%,#0b2e68_67%,#052a5c_80%,#0d2a50_100%)] pl-2 shadow-[inset_0_4px_5px_#6d88b3]">
      <svg viewBox="0 0 38 38" className="h-[38px] w-[38px] shrink-0">
        <defs>
          <radialGradient id="orb" cx=".5" cy=".9" r=".9">
            <stop offset="0" stopColor="#35d6f5" />
            <stop offset=".45" stopColor="#1c6aa8" />
            <stop offset="1" stopColor="#93aec4" />
          </radialGradient>
        </defs>
        <circle cx="19" cy="19" r="18" fill="url(#orb)" stroke="#17375c" />
        <path d="M11 10c3-2 5-2 8 0l-2 8.500c-3-2-5-1-8 0z" fill="#ee6030" />
        <path d="M20 10.500c3 2 6 2 10 0l-2 8.500c-4 2-7 1-10 0z" fill="#8bc63e" />
        <path d="M8.500 19.500c3-2 5-1.500 8 0l-2 8.500c-3-2-5-1.500-8 0z" fill="#3b9de8" />
        <path d="M17.500 20c3 2 6 2 10 0l-2 8.500c-4 2-7 1.500-10 0z" fill="#fcd12a" />
      </svg>
      <div className="ml-[14px] flex gap-1">
        <TaskButton>
          <svg viewBox="0 0 32 29" className="h-[29px] w-8">
            <path d="M11 27L4 21 0 13l4-8 6-4h9l7 4 4 7-3 9-8 6z" fill="#fbd170" stroke="#e0a03a" />
            <path d="M14 26L3 13M14 26L8 4M15 26V2M16 26l6-22M16 26l12-13" stroke="#fff2c0" strokeWidth="1.5" />
            <path d="M21 9l2.500 6 7 1-5 4.500 1 7-5.500-3-6 3 1-7-5-5 7-1z" fill="#ee8a25" stroke="#b9590c" />
          </svg>
        </TaskButton>
        <TaskButton>
          <svg viewBox="0 0 25 28" className="h-7 w-[25px]">
            <rect width="25" height="28" rx="2" fill="#eef8fd" />
            <path d="M3 4.5h19M3 8.5h19M3 12.5h19M3 16.5h19M3 20.5h19M3 24.5h19" stroke="#2e8fc0" strokeWidth="2" />
          </svg>
        </TaskButton>
        <TaskButton active>
          <FoxLogo className="h-[29px] w-7" />
        </TaskButton>
        <TaskButton>
          <svg viewBox="0 0 28 30" className="h-[30px] w-7">
            <path d="M1 27L3 1h18v3" fill="none" stroke="#35a565" />
            <path d="M9 7h9c10 0 10 14 0 14h-3v8H4l4-8z" fill="#0c8c42" />
            <path d="M9 10h8l-1 2H9M8 15h7" stroke="#1f3c62" fill="none" />
          </svg>
        </TaskButton>
        <TaskButton>
          <svg viewBox="0 0 28 30" className="h-[30px] w-7">
            <path d="M1 27L5 1h20" fill="none" stroke="#35a565" />
            <path d="M9 3h10c10 2 9 17 0 18h-3v8H6l3-9z" fill="#12914a" />
            <path d="M10 6h9l-1 4h-6l-1 3h7l-1 4h-7l-2 8H4z" fill="#8295a5" />
          </svg>
        </TaskButton>
        <TaskButton>
          <svg viewBox="0 0 32 32" className="h-8 w-8">
            <path d="M1 1h28l2 2v28H1z" fill="#1f3fc0" stroke="#0a1c70" />
            <path d="M9 1h16v11H9z" fill="#b8c0d8" />
            <path d="M18 2h4v9h-4z" fill="#1f3fc0" />
            <path d="M4 15h24v16H4z" fill="#fff" />
            <path d="M6 18h20M6 22h20M6 27h9" stroke="#c03030" />
            <text x="15" y="30" fontSize="8" fontFamily="Liberation Mono" fill="#000">64</text>
          </svg>
        </TaskButton>
        <TaskButton>
          <svg viewBox="0 0 32 27" className="h-[27px] w-8">
            <path d="M2 14l14 11 14-5v-7z" fill="#2b3340" />
            <path d="M2 12v5l6 5" stroke="#ddd" fill="none" />
            <ellipse cx="18" cy="14" rx="12" ry="8" fill="#17a79c" stroke="#0c5e5c" />
            <ellipse cx="18" cy="13" rx="5" ry="3.5" fill="#1b6d8a" stroke="#e8dc4a" strokeWidth="1.5" />
            <path d="M1 5q5-7 11 0l-6 2z" fill="#25b8a6" />
            <path d="M8 19q10 7 20-1" stroke="#d8e04a" fill="none" />
          </svg>
        </TaskButton>
        <div className="flex w-[58px]">
          <TaskButton className="w-[50px]!">
            <svg viewBox="0 0 30 28" className="h-7 w-[30px]">
              <path d="M1 1h7l21 26h-8z" fill="#7d168c" stroke="#fff" />
              <path d="M28 1L2 27" stroke="#fff" strokeWidth="3" />
              <path d="M28 1L2 27" stroke="#222" />
            </svg>
          </TaskButton>
          <i className="ml-px h-[38px] w-[3px] rounded-r-xs border-r border-[#8c9cb5] bg-[#3a547c]" />
          <i className="h-[38px] w-[3px] rounded-r-xs border-r border-[#8c9cb5] bg-[#2b4670]" />
        </div>
        <TaskButton>
          <svg viewBox="0 0 28 28" className="h-7 w-7">
            <rect width="28" height="28" rx="5" fill="#168bff" />
            <path d="M7.500 4c5 2 10.500 5 13.500 9l-1 5h-2.500l-5 7 .5-5-3.500-3 2-1-3.500-3 2-1c-2-2-2.500-5-2.500-8z" fill="#fff" />
          </svg>
        </TaskButton>
      </div>
      <div className="ml-auto flex h-full shrink-0 items-center text-white">
        <svg viewBox="0 0 16 14" className="h-[14px] w-4">
          <path d="M3 4c2-4 5 1 10-3" stroke="#b8bcc0" fill="none" />
          <rect x=".5" y="5.5" width="15" height="8" rx="1" fill="#d5d5d0" stroke="#8c8c88" />
          <path d="M2 8h12M2 10h12M4 12h8" stroke="#777" strokeDasharray="1 1" />
        </svg>
        <svg viewBox="0 0 16 16" className="mb-1 ml-[7px] h-4 w-4">
          <circle cx="8" cy="8" r="7.2" fill="#1420a8" stroke="#c9d2f0" />
          <text x="8" y="12" fontSize="11" fontWeight="bold" fontFamily="Open Sans" textAnchor="middle" fill="#fff">?</text>
        </svg>
        <svg viewBox="0 0 10 18" className="mb-1.5 ml-[9px] h-[18px] w-2.5">
          <path d="M3.5 1.5h5v3h-5zM1.5 3.5h5v3h-5z" fill="#1b355c" stroke="#fff" />
          <path d="M2 14h5l-2.500 3z" fill="#fff" />
        </svg>
        <svg viewBox="0 0 8 5" className="ml-[9px] h-[5px] w-2">
          <path d="M0 5l4-4.500L8 5z" fill="#fff" />
        </svg>
        <svg viewBox="0 0 16 16" className="ml-[13px] h-4 w-4">
          <path d="M1 1v14" stroke="#fff" strokeWidth="1.5" />
          <path d="M2 2h6v2h6v4H8V7H2z" fill="#fff" />
          <circle cx="11" cy="11" r="4.5" fill="#d42a22" />
          <path d="M9 9l4 4M13 9l-4 4" stroke="#fff" strokeWidth="1.5" />
        </svg>
        <svg viewBox="0 0 16 15" className="ml-2 h-[15px] w-4">
          <path d="M5.5 3.5h9v8h-9zM7 14h7M10 11.5V14M2.5 4v10M1 0v4h4V0M3 0v4" fill="none" stroke="#fff" strokeWidth="1.3" />
        </svg>
        <div className="ml-[13px] w-[64px] text-center text-xs leading-[18.5px] tracking-[0.35px]">
          <div>21:05</div>
          <div>2024/11/2</div>
        </div>
        <div className="ml-1.5 h-[38px] w-[14px] border border-[#7488a5] bg-linear-to-b from-[#6d7f9a] to-[#1c3558]" />
      </div>
    </footer>
  );
}

export default function App() {
  return (
    <div className="flex h-[1080px] w-[1920px] flex-col overflow-hidden bg-white font-['Noto_Sans','Noto_Sans_CJK_SC',sans-serif]">
      <header className="flex h-[22px] shrink-0 items-center bg-linear-to-b from-[#6a94c2] to-[#44709e] pl-[5px] text-[#d7e5f3]">
        <FoxLogo className="mb-px h-[15px] w-[15px]" />
        <span className="mb-0.5 ml-1.5 text-[13px] leading-none">Foxmail</span>
        <svg viewBox="0 0 66 14" className="ml-auto mr-1.5 h-[14px] w-[66px]">
          <path d="M0 10.5h13" stroke="#c4d9ec" strokeWidth="3" />
          <path d="M30.5 2.5h8v5h-8zM26.5 6.5h8v5h-8z" fill="#5480b0" stroke="#c4d9ec" strokeWidth="1.6" />
          <path d="M54 2l10 10M64 2L54 12" stroke="#c4d9ec" strokeWidth="1.8" />
        </svg>
      </header>
      <Toolbar />
      <div className="flex min-h-0 flex-1">
        <Sidebar />
        <MailList />
        <MailBody />
      </div>
      <Taskbar />
    </div>
  );
}
